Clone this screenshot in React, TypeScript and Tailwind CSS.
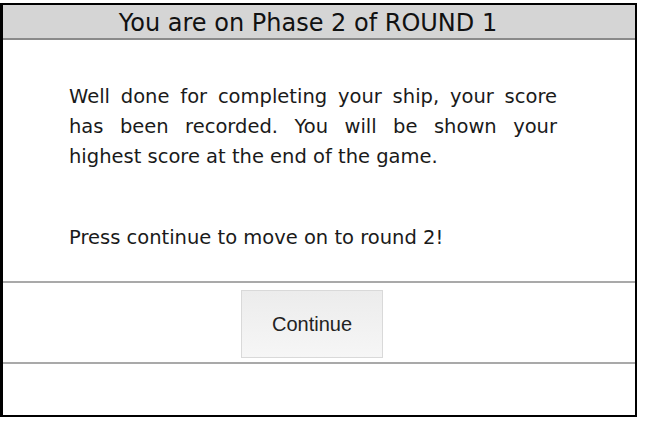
import React from 'react'

const lines = [
    'Well done for completing your ship, your score',
    'has been recorded. You will be shown your',
]

function App() {
    return (
        <div className="w-[652px] h-[422px] bg-white pt-[3px]">
            <div className="w-[637px] h-[414px] border-2 border-l-[3px] border-black flex flex-col bg-white">
                {/* Header */}
                <div className="h-[35px] bg-[#d5d5d5] border-b-2 border-[#8a8a8a] flex items-center justify-center pr-[22px] pt-[2px]">
                    <h1 className="text-[24px] leading-none text-[#111] font-['DejaVu_Sans',sans-serif]">You are on Phase 2 of ROUND 1</h1>
                </div>

                {/* Message */}
                <div className="h-[241px] pl-[66px] pr-[78px] pt-[42px] font-['DejaVu_Sans',sans-serif] text-[19.5px] leading-[30px] text-[#1a1a1a]">
                    {lines.map((l) => (
                        <p key={l} className="text-justify [text-align-last:justify]">{l}</p>
                    ))}
                    <p>highest score at the end of the game.</p>
                    <p className="mt-[51px]">Press continue to move on to round 2!</p>
                </div>

                {/* Button row */}
                <div className="h-[83px] border-t-2 border-b-2 border-[#a9a9a9] flex justify-center pt-[7px]">
                    <button className="w-[142px] h-[68px] ml-[-14px] bg-gradient-to-b from-[#ececec] to-[#f6f6f6] border border-[#d9d9d9] text-[20px] text-[#222] font-['Liberation_Sans',Arial,sans-serif]">
                        Continue
                    </button>
                </div>

                <div className="flex-1" />
            </div>
        </div>
    )
}

export default App
